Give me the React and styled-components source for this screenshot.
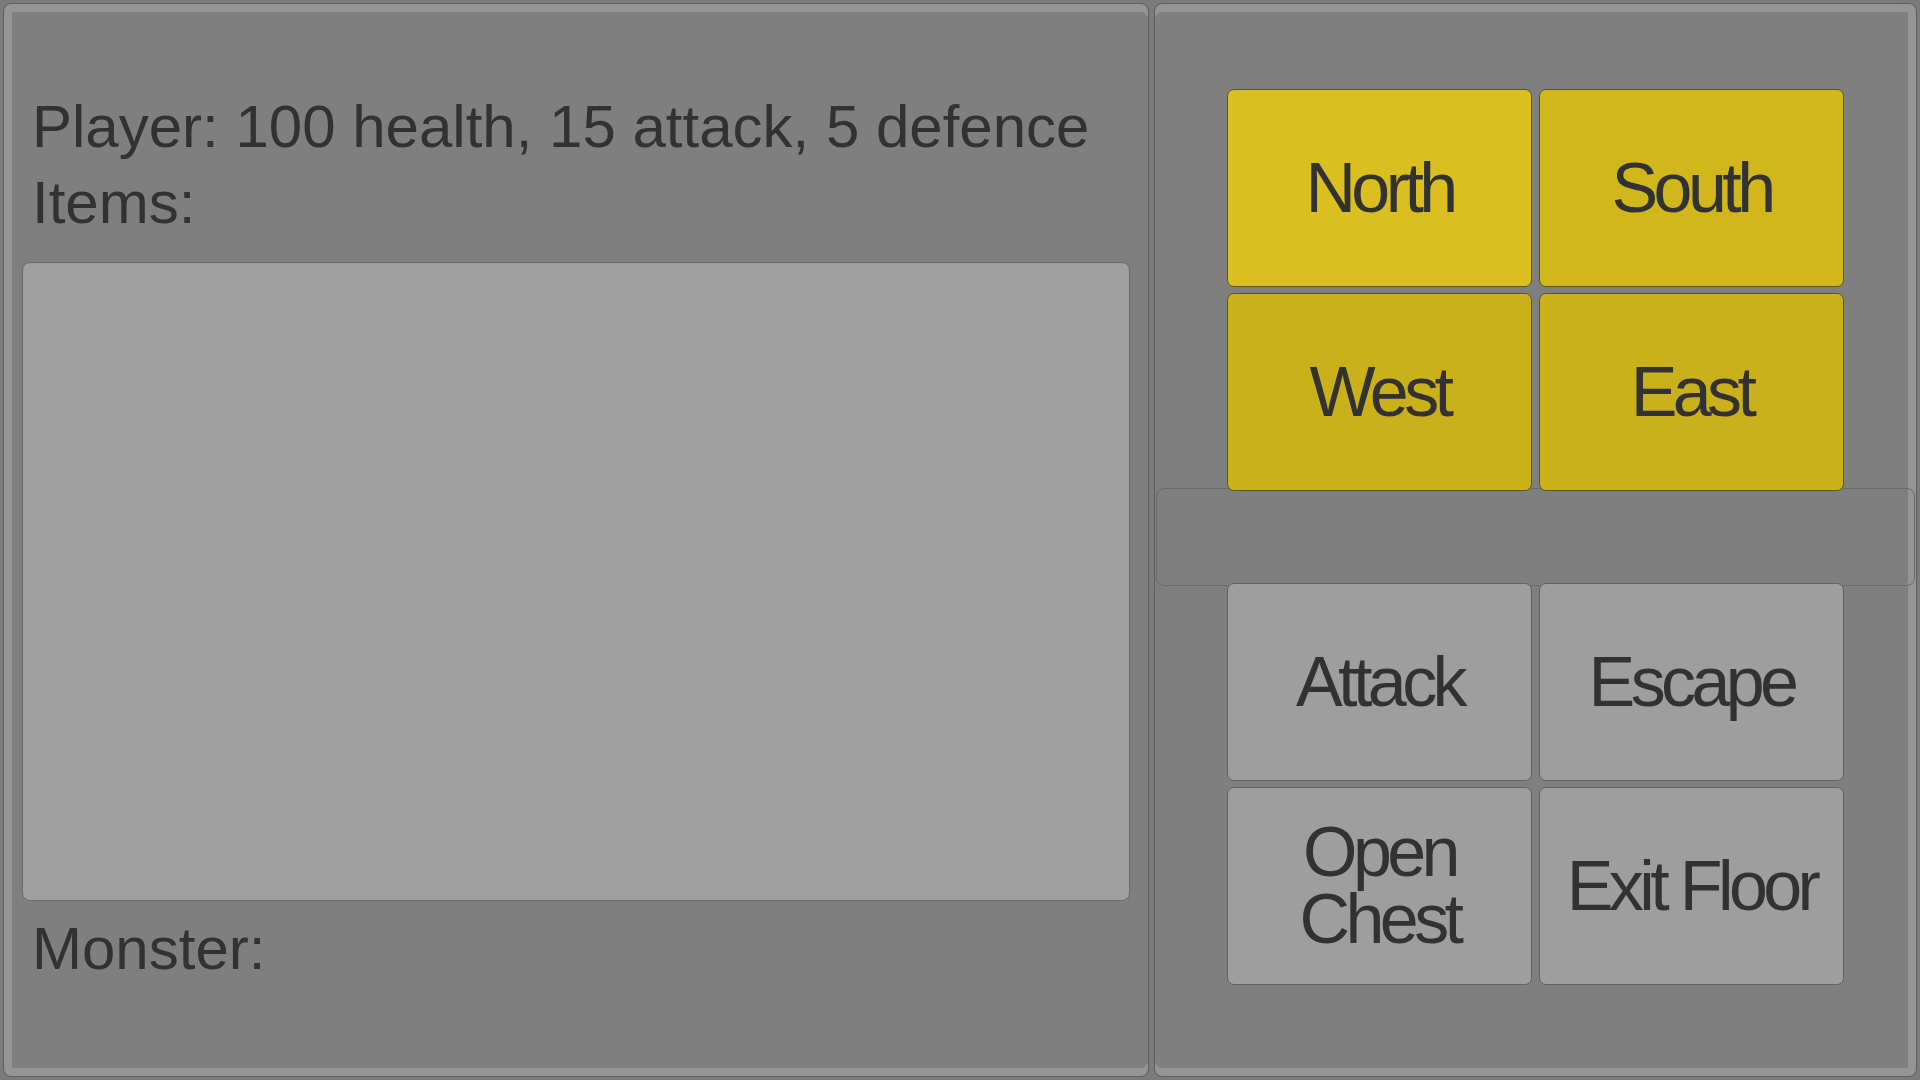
import styled, { createGlobalStyle } from 'styled-components'

const GlobalStyle = createGlobalStyle`
    html, body {
        margin: 0;
        padding: 0;
        background: #7b7b7b;
        font-family: "Liberation Sans", Arial, sans-serif;
        color: #323232;
    }
    * {
        box-sizing: border-box;
    }
`

const moves = [
    { label: 'North', tone: '#dbbe1f' },
    { label: 'South', tone: '#d1b71c' },
    { label: 'West', tone: '#cab01b' },
    { label: 'East', tone: '#cab01b' },
]

const actions = ['Attack', 'Escape', 'Open Chest', 'Exit Floor']

const player = { health: 100, attack: 15, defence: 5 }

const App = () => {
    return (
        <Screen>
            <GlobalStyle />

            <LeftPanel>
                <Label>
                    Player: {player.health} health, {player.attack} attack, {player.defence} defence
                </Label>
                <Label>Items:</Label>
                <ItemsBox />
                <Label $top={10}>Monster:</Label>
            </LeftPanel>

            <RightPanel>
                <ButtonGrid>
                    {moves.map((move) => (
                        <GameButton key={move.label} $bg={move.tone} $border="#5f5520">
                            {move.label}
                        </GameButton>
                    ))}
                </ButtonGrid>

                <MessageBar />

                <ButtonGrid>
                    {actions.map((action) => (
                        <GameButton key={action} $bg="#9e9e9e" $border="#616161">
                            {action}
                        </GameButton>
                    ))}
                </ButtonGrid>
            </RightPanel>
        </Screen>
    )
}

export default App

const Screen = styled.div`
    width: 1920px;
    height: 1080px;
    padding: 3px;
    display: flex;
    gap: 5px;
`

const Panel = styled.div`
    height: 100%;
    border: 1px solid #5e5e5e;
    border-radius: 8px;
    background: #7f7f7f;
    display: flex;
    flex-direction: column;
`

const LeftPanel = styled(Panel)`
    width: 1146px;
    flex: none;
    padding: 85px 18px 0 18px;
    box-shadow: inset 8px 0 0 #959595, inset 0 8px 0 #959595, inset 0 -8px 0 #959595;
`

const RightPanel = styled(Panel)`
    flex: 1;
    padding-top: 85px;
    box-shadow: inset -8px 0 0 #959595, inset 0 8px 0 #959595, inset 0 -8px 0 #959595;
`

const Label = styled.div`
    margin-top: ${({ $top }) => $top || 0}px;
    padding-left: 10px;
    font-size: 60px;
    line-height: 76px;
    white-space: nowrap;
`

const ItemsBox = styled.div`
    margin-top: 21px;
    height: 639px;
    background: #a0a0a0;
    border: 1px solid #6a6a6a;
    border-radius: 8px;
`

const ButtonGrid = styled.div`
    display: grid;
    grid-template-columns: 305px 305px;
    grid-auto-rows: 198px;
    gap: 6px 7px;
    justify-content: center;
    position: relative;
    z-index: 1;
`

const GameButton = styled.div`
    display: flex;
    align-items: center;
    justify-content: center;
    text-align: center;
    padding: 0 12px;
    background: ${({ $bg }) => $bg};
    border: 1px solid ${({ $border }) => $border};
    border-radius: 7px;
    font-size: 70px;
    line-height: 67px;
    letter-spacing: -4.6px;
    color: #323232;
`

const MessageBar = styled.div`
    height: 98px;
    margin: -3px 1px;
    border: 1px solid #6a6a6a;
    border-radius: 8px;
    background: transparent;
`
